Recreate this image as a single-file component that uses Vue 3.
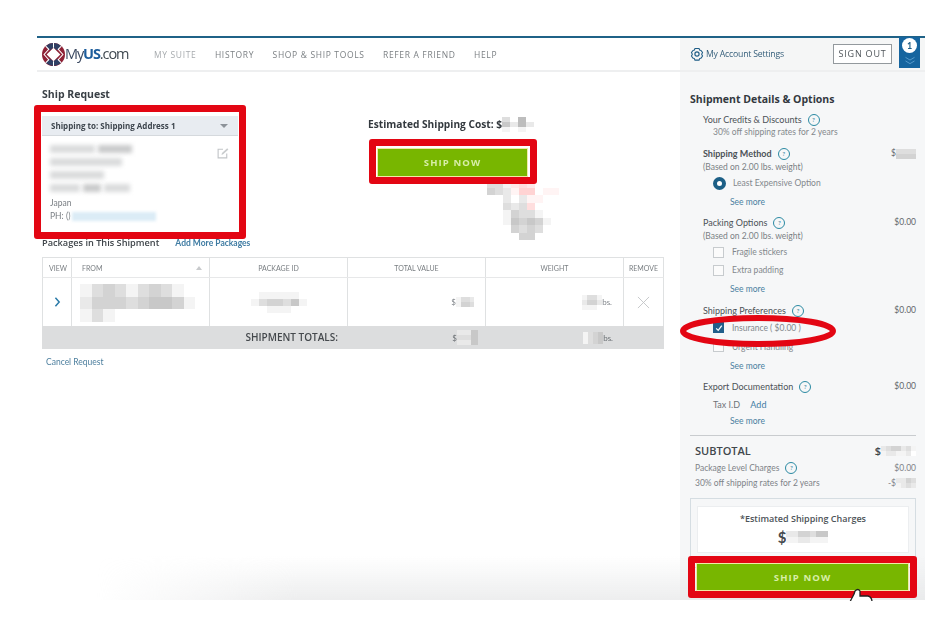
<script setup>
const shade = (d) => {
  const v = 255 - Number(d) * 11
  return `rgb(${v},${v},${v})`
}
const pink = (d) => {
  const v = 255 - Number(d) * 11
  return `rgb(255,${v},${v})`
}
const cells = (rows) => rows.flatMap((row) => row.split(''))
const cellColor = (c) => (c >= 'a' ? pink(c.charCodeAt(0) - 96) : shade(c))
const cols = (rows, w) => `repeat(${rows[0].length}, ${w}px)`

const M = {
  cost: ['3060', '5262', '1010'],
  method: ['3333', '4444'],
  fromBlock: ['1343134310', '2444345541', '1310000000'],
  pkg: ['0111110', '1344351', '0011100'],
  value: ['1332', '1443'],
  weight: ['1331', '2442', '1110'],
  totVal: ['225', '335', '225'],
  totWeight: ['1345', '1345'],
  big: ['331bcb000', '432add0aa', '00202aa00', '00323c000', '001433100', '001545410', '000434300', '000044000'],
  sub: ['2344231', '1221120'],
  discount: ['2243', '1232'],
  grand: ['2244355', '1122111']
}
</script>

<template>
  <div class="page">
    <div class="frame">
      <header class="top">
        <div class="brand">
          <svg class="globe" viewBox="0 0 44 44" width="23" height="23">
            <circle cx="22" cy="22" r="22" fill="#8e2135" />
            <path d="M22 0A22 22 0 0 1 37 6L29 14L22 9L15 14L7 6A22 22 0 0 1 22 0Z" fill="#2f3f63" />
            <path d="M22 44A22 22 0 0 1 7 38L15 30L22 35L29 30L37 38A22 22 0 0 1 22 44Z" fill="#2f3f63" />
            <path d="M22 9L35 22L22 35L9 22Z" fill="#fff" />
            <path d="M7 6L13 12L4 22L13 32L7 38M37 6L31 12L40 22L31 32L37 38" fill="none" stroke="#fff" stroke-width="2" />
            <path d="M22 0V9M22 35V44" stroke="#fff" stroke-width="2" />
          </svg>
          <span class="wordmark">My<b>US</b><i>.com</i></span>
        </div>
        <nav class="nav">
          <a class="active">MY SUITE</a>
          <a>HISTORY</a>
          <a>SHOP &amp; SHIP TOOLS</a>
          <a>REFER A FRIEND</a>
          <a>HELP</a>
        </nav>
        <div class="account">
          <svg class="gear" viewBox="0 0 24 24" width="14" height="14">
            <path d="M8.5 2.5h7l1 2.6 2.7 1.1 2.3 3.3-1.500 3 1.500 2.900-2.300 3.400-2.700 1-1 2.700h-7l-1-2.700-2.700-1-2.300-3.400 1.500-2.900-1.500-3 2.300-3.300 2.700-1.100z" fill="none" stroke="#1f5d86" stroke-width="1.8" />
            <circle cx="12" cy="12" r="3.6" fill="none" stroke="#1f5d86" stroke-width="2" />
          </svg>
          <span class="account-link">My Account Settings</span>
          <button class="signout">SIGN OUT</button>
          <div class="badge">
            <span class="badge-count">1</span>
            <svg viewBox="0 0 12 10" width="12" height="9">
              <path d="M1 1.500l5 3 5-3M1 5.500l5 3 5-3" fill="none" stroke="#5d9fce" stroke-width="1" />
            </svg>
          </div>
        </div>
      </header>

      <div class="content">
        <main class="main">
          <div class="upper">
            <section class="ship-col">
              <h1 class="page-title">Ship Request</h1>
              <div class="address">
                <div class="address-head">
                  <span>Shipping to: Shipping Address 1</span>
                  <i class="caret"></i>
                </div>
                <div class="address-body">
                  <div class="smears">
                    <div class="smear-row"><span class="smear w45"></span><span class="smear w34 dark"></span></div>
                    <span class="smear w70"></span>
                    <span class="smear w54"></span>
                    <div class="smear-row"><span class="smear w28"></span><span class="smear w18 dark"></span><span class="smear w26"></span></div>
                  </div>
                  <svg class="edit" viewBox="0 0 16 16" width="12" height="12">
                    <path d="M13 8.500v6H1.500V3H8" fill="none" stroke="#c2c5c8" stroke-width="1.500" />
                    <path d="M6 10.500l.6-2.500 7-6.500 1.600 1.700-7 6.500z" fill="#c9ccce" />
                  </svg>
                  <div class="addr-line">Japan</div>
                  <div class="addr-line">PH: ()<span class="phone-smear"></span></div>
                </div>
              </div>
            </section>

            <section class="cost-col">
              <div class="cost">Estimated Shipping Cost: $<span class="mosaic" :style="{ gridTemplateColumns: cols(M.cost, 8) }"><i v-for="(c, i) in cells(M.cost)" :key="i" class="cell tiny" :style="{ background: cellColor(c) }"></i></span></div>
              <button class="ship-btn top-btn">SHIP NOW</button>
              <span class="mosaic big" :style="{ gridTemplateColumns: cols(M.big, 8) }"><i v-for="(c, i) in cells(M.big)" :key="i" class="cell" :style="{ background: cellColor(c) }"></i></span>
            </section>
          </div>

          <div class="packages-head">
            <h2>Packages in This Shipment</h2>
            <a>Add More Packages</a>
          </div>

          <div class="table">
            <div class="tr thead">
              <div class="td c-view">VIEW</div>
              <div class="td c-from">FROM<i class="sort"></i></div>
              <div class="td c-mid center">PACKAGE ID</div>
              <div class="td c-mid center">TOTAL VALUE</div>
              <div class="td c-mid center">WEIGHT</div>
              <div class="td c-remove center">REMOVE</div>
            </div>
            <div class="tr tbody">
              <div class="td c-view center">
                <svg viewBox="0 0 8 12" width="7" height="10"><path d="M1.500 1l4.500 5-4.500 5" fill="none" stroke="#2a7aa8" stroke-width="1.800" /></svg>
              </div>
              <div class="td c-from from-cell">
                <span class="mosaic" :style="{ gridTemplateColumns: cols(M.fromBlock, 11.5) }"><i v-for="(c, i) in cells(M.fromBlock)" :key="i" class="cell from" :style="{ background: cellColor(c) }"></i></span>
              </div>
              <div class="td c-mid center">
                <span class="mosaic" :style="{ gridTemplateColumns: cols(M.pkg, 8) }"><i v-for="(c, i) in cells(M.pkg)" :key="i" class="cell short" :style="{ background: cellColor(c) }"></i></span>
              </div>
              <div class="td c-mid end">$<span class="mosaic" :style="{ gridTemplateColumns: cols(M.value, 4.5) }"><i v-for="(c, i) in cells(M.value)" :key="i" class="cell mini" :style="{ background: cellColor(c) }"></i></span></div>
              <div class="td c-mid end"><span class="mosaic" :style="{ gridTemplateColumns: cols(M.weight, 5) }"><i v-for="(c, i) in cells(M.weight)" :key="i" class="cell mini" :style="{ background: cellColor(c) }"></i></span>bs.</div>
              <div class="td c-remove center">
                <svg viewBox="0 0 14 14" width="13" height="13"><path d="M1 1l12 12M13 1L1 13" stroke="#c4c6c8" stroke-width="1" /></svg>
              </div>
            </div>
            <div class="tr totals">
              <div class="tot-label">SHIPMENT TOTALS:</div>
              <div class="td c-mid end tot-end">$<span class="mosaic" :style="{ gridTemplateColumns: cols(M.totVal, 7) }"><i v-for="(c, i) in cells(M.totVal)" :key="i" class="cell tall-cell" :style="{ background: cellColor(c) }"></i></span></div>
              <div class="td c-mid end"><span class="mosaic" :style="{ gridTemplateColumns: cols(M.totWeight, 5) }"><i v-for="(c, i) in cells(M.totWeight)" :key="i" class="cell mini2" :style="{ background: cellColor(c) }"></i></span>bs.</div>
              <div class="td c-remove"></div>
            </div>
          </div>
          <a class="cancel">Cancel Request</a>
        </main>

        <aside class="side">
          <h2 class="side-title">Shipment Details &amp; Options</h2>

          <div class="opt first">
            <div class="opt-head"><span>Your Credits &amp; Discounts</span><i class="help">?</i></div>
            <div class="indent-sub">30% off shipping rates for 2 years</div>
          </div>

          <div class="opt">
            <div class="opt-head strong">
              <span>Shipping Method</span><i class="help">?</i>
              <span class="price">$<span class="mosaic" :style="{ gridTemplateColumns: cols(M.method, 5) }"><i v-for="(c, i) in cells(M.method)" :key="i" class="cell mini" :style="{ background: cellColor(c) }"></i></span></span>
            </div>
            <div class="note">(Based on 2.00 lbs. weight)</div>
            <label class="choice"><i class="radio"></i>Least Expensive Option</label>
            <a class="more">See more</a>
          </div>

          <div class="opt snug">
            <div class="opt-head"><span>Packing Options</span><i class="help">?</i><span class="price">$0.00</span></div>
            <div class="note">(Based on 2.00 lbs. weight)</div>
            <label class="choice"><i class="box"></i>Fragile stickers</label>
            <label class="choice"><i class="box"></i>Extra padding</label>
            <a class="more">See more</a>
          </div>

          <div class="opt">
            <div class="opt-head"><span>Shipping Preferences</span><i class="help">?</i><span class="price">$0.00</span></div>
            <div class="prefs">
              <label class="choice">
                <i class="box checked"><svg viewBox="0 0 10 10" width="8" height="8"><path d="M1.500 5.500l2.500 2.500 4.500-6" fill="none" stroke="#fff" stroke-width="1.600" /></svg></i>Insurance ( $0.00 )
              </label>
              <label class="choice"><i class="box"></i>Urgent Handling</label>
            </div>
            <a class="more">See more</a>
          </div>

          <div class="opt snug">
            <div class="opt-head"><span>Export Documentation</span><i class="help">?</i><span class="price">$0.00</span></div>
            <div class="taxid">Tax I.D <a>Add</a></div>
            <a class="more">See more</a>
          </div>

          <div class="subtotal">
            <div class="sub-row big-row">
              <span>SUBTOTAL</span>
              <span class="sub-val">$<span class="mosaic" :style="{ gridTemplateColumns: cols(M.sub, 5) }"><i v-for="(c, i) in cells(M.sub)" :key="i" class="cell mini" :style="{ background: cellColor(c) }"></i></span></span>
            </div>
            <div class="sub-row"><span class="sub-left">Package Level Charges<i class="help">?</i></span><span>$0.00</span></div>
            <div class="sub-row last"><span>30% off shipping rates for 2 years</span><span class="sub-val">-$<span class="mosaic" :style="{ gridTemplateColumns: cols(M.discount, 5) }"><i v-for="(c, i) in cells(M.discount)" :key="i" class="cell mini" :style="{ background: cellColor(c) }"></i></span></span></div>
          </div>

          <div class="estimate">
            <div class="estimate-inner">
              <div class="est-title">*Estimated Shipping Charges</div>
              <div class="est-val">$<span class="mosaic" :style="{ gridTemplateColumns: cols(M.grand, 6) }"><i v-for="(c, i) in cells(M.grand)" :key="i" class="cell mini2" :style="{ background: cellColor(c) }"></i></span></div>
            </div>
          </div>
          <button class="ship-btn side-btn">SHIP NOW</button>
        </aside>
      </div>
      <div class="fade"></div>
    </div>

    <!-- annotations drawn over the captured page -->
    <div class="mark mark-address"></div>
    <div class="mark mark-top"></div>
    <div class="mark mark-side"></div>
    <svg class="ellipse" viewBox="0 0 160 36" width="160" height="36">
      <ellipse cx="80" cy="18" rx="75" ry="13" fill="none" stroke="#e30613" stroke-width="6" />
    </svg>
    <svg class="hand" viewBox="0 0 34 13" width="34" height="13">
      <path d="M4 14C6 9 8 8 9 3Q12 0 14 3L14 8L22 8Q26 9 26 14" fill="#fff" stroke="#222" stroke-width="1.300" />
    </svg>
  </div>
</template>

<style>
html, body { margin: 0; background: #fff; }
</style>

<style scoped>
.page {
  position: relative;
  width: 952px;
  height: 628px;
  overflow: hidden;
  background: #fff;
  font-family: "Lato", "Open Sans", "Liberation Sans", sans-serif;
  color: #555b60;
}
.frame {
  position: relative;
  width: 888px;
  height: 600px;
  margin-left: 37px;
  padding-top: 36px;
  box-sizing: border-box;
  overflow: hidden;
  filter: blur(0.35px);
}
.top {
  display: flex;
  align-items: stretch;
  height: 36px;
  box-sizing: border-box;
  border-top: 2px solid #1f6287;
  border-bottom: 2px solid #eeeff0;
}
.brand { display: flex; align-items: center; width: 117px; padding-left: 5px; box-sizing: border-box; gap: 0; }
.globe { flex: none; }
.wordmark { font-family: "Open Sans", sans-serif; font-size: 14.5px; color: #3c4a62; letter-spacing: -1.100px; margin-top: -2px; }
.wordmark b { color: #1c5d9c; font-weight: 700; }
.wordmark i { font-style: normal; color: #3f4850; }
.nav { display: flex; align-items: center; gap: 18.5px; font-family: "Open Sans", sans-serif; font-size: 8.5px; letter-spacing: 0.650px; color: #7c8084; flex: 1; padding-top: 1px; }
.nav .active { color: #a7abae; }
.account { width: 245px; background: #f5f6f6; display: flex; align-items: center; position: relative; box-sizing: border-box; padding-left: 10px; }
.gear { flex: none; margin-right: 2px; }
.account-link { font-size: 8.7px; color: #37607c; flex: 1; font-family: "Open Sans", sans-serif; letter-spacing: -0.200px; }
.signout {
  width: 59px; height: 20px; padding: 0; margin: -1px 7px 0 0; border: 1px solid #93999d; background: #fff;
  font-family: "Open Sans", sans-serif; font-size: 9px; letter-spacing: 0.800px; color: #50565b;
}
.badge {
  width: 21px; height: 31px; margin: -1px 5px 0 0; align-self: flex-start; background: #16659f;
  display: flex; flex-direction: column; align-items: center; padding-top: 1px; box-sizing: border-box;
}
.badge-count {
  width: 15px; height: 15px; border-radius: 50%; background: #fff; color: #1b5c85; font-size: 9px; font-weight: 700;
  display: flex; align-items: center; justify-content: center; margin-bottom: 3px;
}

.content { display: flex; height: 528px; }
.main { width: 643px; box-sizing: border-box; padding: 15px 0 0 5px; }
.upper { display: flex; height: 149px; }
.ship-col { width: 326px; flex: none; }
.page-title { margin: 0 0 14px; font-family: "Open Sans", sans-serif; font-size: 10.5px; line-height: 15px; font-weight: 700; color: #3a4046; }
.address { width: 196px; }
.address-head {
  display: flex; align-items: center; justify-content: space-between; height: 20px; padding: 0 9px; box-sizing: border-box;
  background: #e8ecf1; border-bottom: 1px solid #d5d9dd; font-family: "Open Sans", sans-serif; font-size: 8px; font-weight: 700; color: #3e464e;
}
.caret { border: 4px solid transparent; border-top: 4px solid #8c9299; margin-top: 4px; margin-right: 1px; }
.address-body { position: relative; padding: 9px 9px 0 8px; }
.smears { display: flex; flex-direction: column; gap: 5px; height: 52px; }
.smear-row { display: flex; gap: 3px; }
.smear { display: block; height: 8px; background: #dadbdc; filter: blur(2px); }
.smear.dark { background: #c9cacb; }
.w45 { width: 45px; } .w34 { width: 34px; } .w70 { width: 72px; } .w54 { width: 54px; } .w28 { width: 30px; } .w18 { width: 18px; } .w26 { width: 26px; }
.edit { position: absolute; right: 9px; top: 11px; }
.addr-line { font-size: 8.5px; line-height: 13px; color: #7a7f84; display: flex; align-items: center; }
.phone-smear { width: 84px; height: 9px; background: #dbecf6; filter: blur(1.5px); margin-left: 2px; }

.cost-col { display: flex; flex-direction: column; position: relative; padding-top: 30px; }
.cost { font-family: "Open Sans", sans-serif; font-size: 10.2px; line-height: 15px; font-weight: 700; color: #33393e; white-space: nowrap; display: flex; align-items: center; }
.ship-btn {
  display: block; border: 1px solid #f1eaa6; background: #78b600; color: #d8eea8;
  font-family: "Open Sans", sans-serif; font-size: 9.5px; font-weight: 700; letter-spacing: 1.100px; padding: 0;
}
.top-btn { width: 151px; height: 29px; margin: 16px 0 0 9px; }
.mosaic { display: inline-grid; filter: blur(0.5px); vertical-align: middle; }
.cell { display: block; height: 8px; }
.cell.tiny { height: 5px; }
.cell.from { height: 12.5px; }
.cell.short { height: 7px; }
.cell.mini { height: 5px; }
.cell.mini2 { height: 6px; }
.cell.tall-cell { height: 5px; }
.big { position: absolute; left: 119px; top: 93px; }
.big .cell { height: 7.5px; }

.packages-head { display: flex; align-items: baseline; gap: 16px; height: 20px; }
.packages-head h2 { margin: 0; font-family: "Open Sans", sans-serif; font-size: 9.2px; font-weight: 600; line-height: 14px; color: #3f454a; }
.packages-head a { font-size: 8.5px; font-weight: 700; color: #3f7ca3; letter-spacing: 0; }

.table { width: 622px; margin-top: 1px; }
.tr { display: flex; }
.td { box-sizing: border-box; display: flex; align-items: center; border-right: 1px solid #dfe1e2; }
.td:last-child { border-right: 0; }
.center { justify-content: center; }
.end { justify-content: flex-end; padding-right: 11px; }
.c-view { width: 30px; flex: none; padding-left: 6px; }
.c-view.center { padding-left: 0; }
.c-from { width: 138px; flex: none; padding-left: 10px; position: relative; }
.c-mid { width: 138px; flex: none; }
.c-remove { width: 40px; flex: none; }
.thead { height: 21px; border: 1px solid #dfe1e2; border-bottom: 1px solid #e7e8e9; box-sizing: border-box; font-size: 7px; color: #797e82; width: 622px; }
.thead .c-view { width: 29px; }
.thead .c-remove { width: 39px; }
.sort { position: absolute; right: 7px; top: 8px; border: 3px solid transparent; border-bottom: 4px solid #c8cacc; border-top: 0; }
.tbody { height: 48px; border-left: 1px solid #dfe1e2; border-right: 1px solid #dfe1e2; box-sizing: border-box; width: 622px; font-size: 8px; color: #80858a; }
.tbody .c-view { width: 29px; }
.tbody .c-remove { width: 39px; }
.from-cell { align-items: flex-start; padding-top: 6px; padding-left: 8px; }
.totals { height: 23px; background: #dcddde; font-size: 8px; color: #6a6f73; }
.totals .td { border-right: 0; }
.tot-end { padding-right: 8px; }
.tot-label { width: 306px; flex: none; text-align: right; padding-right: 10px; box-sizing: border-box; font-family: "Open Sans", sans-serif; font-size: 10px; font-weight: 600; color: #45494d; line-height: 23px; }
.cancel { display: block; margin: 7px 0 0 4px; font-size: 8.5px; line-height: 12px; color: #4d7f9e; }

.side { width: 245px; background: #f6f7f8; box-sizing: border-box; padding: 19px 9px 0 10px; position: relative; height: 528px; }
.side-title { margin: 0 0 5px; font-family: "Open Sans", sans-serif; font-size: 10.5px; line-height: 16px; font-weight: 700; color: #33393f; }
.opt { margin-left: 13px; margin-top: 8px; }
.opt.first { margin-top: 6px; }
.opt.snug { margin-top: 7px; }
.opt-head { display: flex; align-items: center; font-size: 9px; line-height: 13px; color: #4c5257; }
.opt-head.strong > span:first-child { font-weight: 700; }
.help {
  width: 10px; height: 10px; border: 1px solid #2b8aa3; border-radius: 50%; margin-left: 6px; font-style: normal;
  font-size: 6.5px; line-height: 10px; text-align: center; color: #2b7f98; flex: none;
}
.price { margin-left: auto; font-size: 8.5px; color: #62676c; display: flex; align-items: center; }
.indent-sub { margin-left: 10px; font-size: 8.5px; line-height: 13px; color: #84898d; }
.note { font-size: 8.5px; line-height: 14px; color: #7a7f84; }
.choice { display: flex; align-items: center; height: 18px; margin-left: 10px; font-size: 8.5px; color: #83888d; }
.prefs { margin-top: 1px; }
.prefs .choice { height: 19px; }
.radio { width: 5px; height: 5px; border-radius: 50%; background: #fff; border: 4px solid #1c5f86; margin-right: 7px; flex: none; }
.box {
  width: 9px; height: 9px; border: 1px solid #c7cbce; background: #fbfbfb; margin-right: 8px; flex: none;
  display: flex; align-items: center; justify-content: center;
}
.box.checked { background: #215f8b; border-color: #215f8b; }
.more { display: block; margin: 4px 0 0 27px; font-size: 8.5px; line-height: 13px; color: #4b7f9f; }
.taxid { margin: 5px 0 0 10px; font-size: 9px; line-height: 13px; color: #6f7479; }
.taxid a { margin-left: 8px; color: #3f7ca3; }

.subtotal { margin-top: 7px; border-top: 1px solid #c9cccf; padding-top: 7px; }
.sub-row { display: flex; justify-content: space-between; align-items: center; margin-left: 5px; font-size: 8.5px; line-height: 14px; color: #7e8388; }
.big-row { font-family: "Open Sans", sans-serif; font-size: 11px; line-height: 16px; font-weight: 600; color: #41474c; margin-bottom: 2px; }
.sub-row.last { margin-top: 1px; }
.sub-left { display: flex; align-items: center; }
.sub-val { display: flex; align-items: center; }

.estimate { margin-top: 8px; height: 70px; border: 1px solid #d5dde2; box-sizing: border-box; padding: 7px 6px 0; }
.estimate-inner { height: 47px; background: #fff; box-sizing: border-box; border: 1px solid #eceef0; text-align: center; padding-top: 5px; }
.est-title { font-family: "Open Sans", sans-serif; font-size: 9px; line-height: 14px; font-weight: 600; color: #4d5358; }
.est-val { display: flex; justify-content: center; align-items: center; font-size: 15px; font-weight: 700; line-height: 20px; color: #45494d; margin-top: 1px; }
.side-btn { position: absolute; left: 16px; bottom: 9px; width: 213px; height: 28px; z-index: 2; }

.fade {
  position: absolute; left: 0; bottom: 0; width: 888px; height: 44px; z-index: 1;
  background: linear-gradient(to bottom, rgba(225,226,227,0), rgba(225,226,227,0.6));
  -webkit-mask-image: linear-gradient(to right, transparent 60px, #000 260px);
  mask-image: linear-gradient(to right, transparent 60px, #000 260px);
  pointer-events: none;
}
.mark { position: absolute; border: 7px solid #e30613; border-radius: 3px; box-sizing: border-box; pointer-events: none; }
.mark-address { left: 34px; top: 105px; width: 212px; height: 134px; }
.mark-top { left: 369px; top: 139px; width: 168px; height: 45px; }
.mark-side { left: 688px; top: 556px; width: 229px; height: 42px; }
.ellipse { position: absolute; left: 678px; top: 313px; }
.hand { position: absolute; left: 846px; top: 588px; }
</style>
